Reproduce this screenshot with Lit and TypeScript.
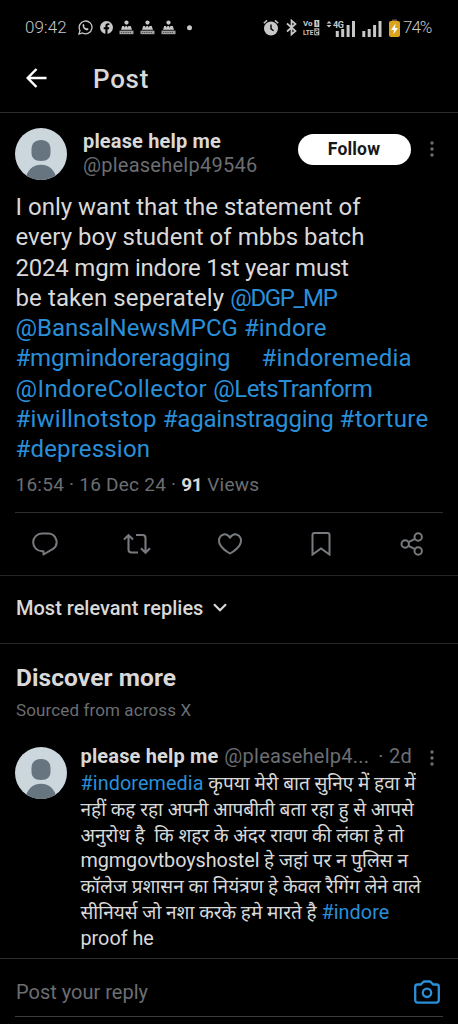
import { LitElement, html, css, svg } from "lit";
import { customElement } from "lit/decorators.js";

type Part = { text: string; kind: "plain" | "link" | "latin"; spacing: number };

const t = (text: string, spacing = 0): Part => ({ text, kind: "plain", spacing });
const a = (text: string, spacing = 0): Part => ({ text, kind: "link", spacing });
const l = (text: string, spacing = 0): Part => ({ text, kind: "latin", spacing });

const POST: Part[][] = [
  [t("I only want that the statement of", 0)],
  [t("every boy student of mbbs batch", 0.03)],
  [t("2024 mgm indore 1st year must", -0.22)],
  [t("be taken seperately ", 0.1), a("@DGP_MP", -1.35)],
  [a("@BansalNewsMPCG", 0), t(" "), a("#indore", 0.15)],
  [a("#mgmindoreragging", -0.16), t("     ", 0.3), a("#indoremedia", 0.18)],
  [a("@IndoreCollector", 0.42), t(" ", 0.2), a("@LetsTranform", -0.55)],
  [a("#iwillnotstop", 0.24), t(" "), a("#againstragging", -0.2), t(" "), a("#torture", 0.3)],
  [a("#depression", 0.18)],
];

const REPLY: Part[][] = [
  [a("#indoremedia", 0.1), t(" कृपया मेरी बात सुनिए में हवा में")],
  [t("नहीं कह रहा अपनी आपबीती बता रहा हु से आपसे")],
  [t("अनुरोध है  कि शहर के अंदर रावण की लंका हे तो")],
  [l("mgmgovtboyshostel", -0.07), t(" हे जहां पर न पुलिस न")],
  [t("कॉलेज प्रशासन का नियंत्रण हे केवल रैगिंग लेने वाले")],
  [t("सीनियर्स जो नशा करके हमे मारते है "), a("#indore", 0.1)],
  [l("proof he")],
];

const lines = (list: Part[][]) =>
  list.map(
    (parts) => html`<div class="line">${parts.map(
      (p) => html`<span class=${p.kind} style="letter-spacing:${p.spacing}px">${p.text}</span>`
    )}</div>`
  );

const avatar = html`<svg class="avatar" width="52" height="52" viewBox="0 0 52 52">
  <defs><clipPath id="disc"><circle cx="26" cy="26" r="26" /></clipPath></defs>
  <g clip-path="url(#disc)">
    <rect width="52" height="52" fill="#ccd6dd" />
    <path d="M26 12c6 0 9.500 3.500 9.500 9.500v3c0 5.500-3 8.500-9.500 8.500s-9.500-3-9.500-8.500v-3C16.500 15.500 20 12 26 12z" fill="#66757f" />
    <path d="M10 54c1-11 7-17.300 16-17.300S41 43 42 54z" fill="#66757f" />
  </g>
</svg>`;

const dots = html`<svg class="dots" width="6" height="18" viewBox="0 0 6 18" fill="#6b6e72">
  <circle cx="3" cy="3" r="1.700" /><circle cx="3" cy="9" r="1.700" /><circle cx="3" cy="15" r="1.700" />
</svg>`;

const people = html`<svg width="15" height="15" viewBox="0 0 15 15" fill="#c8c8c8">
  <circle cx="7.500" cy="2.600" r="2.100" />
  <path d="M3.200 6h2v1.200h1V6h2v1.200h1V6h2.500l1.300 3.800H2z" />
  <path d="M.5 10.600h14v3.600H.5z" opacity=".8" />
  <path d="M2 12.500h11" stroke="#000" stroke-width=".9" stroke-dasharray="1.200 1" opacity=".6" />
</svg>`;

const bars = (x: number) => svg`<path d="M${x} 12h3v6h-3zM${x + 5.4} 10h3v8h-3zM${x + 10.8} 6h3v12h-3zM${x + 16.2} 2h3v16h-3z" />`;

@customElement("app-root")
export class AppRoot extends LitElement {
  static styles = css`
    :host {
      display: flex;
      flex-direction: column;
      height: 1024px;
      overflow: hidden;
      background: #000;
      color: #d9d9d9;
      font-family: Roboto, "Noto Sans", sans-serif;
      font-size: 20px;
    }
    svg { display: block; flex: none; }
    .status { display: flex; align-items: center; height: 55px; padding: 0 27px 0 25px; font-size: 17px; line-height: 20px; color: #c8c8c8; box-sizing: border-box; }
    .clock { width: 53px; letter-spacing: 0.1px; font-weight: 300; margin-top: -1px; }
    .notes { display: flex; align-items: center; gap: 6px; flex: 1; }
    .notes .fb { margin-left: 1px; }
    .system { display: flex; align-items: center; }
    .bt { margin-left: 7px; }
    .volte { margin-left: 6px; }
    .sig1 { margin-left: 5px; }
    .sig2 { margin-left: 6px; }
    .batt { margin-left: 7px; }
    .pct { margin: -1px 0 0 3px; letter-spacing: -1px; font-weight: 300; width: 28px; white-space: nowrap; }
    .bar { display: flex; align-items: center; height: 58px; box-sizing: border-box; padding: 0 0 12px 26px; border-bottom: 1px solid #2a2c2e; }
    .bar h1 { margin: 3px 0 0 46px; font-size: 26px; font-weight: 500; line-height: 30px; letter-spacing: 0.7px; }
    .post { display: flex; flex-direction: column; height: 462px; padding: 0 15px; border-bottom: 1px solid #232527; }
    .author { display: flex; height: 79px; padding-top: 15px; box-sizing: border-box; }
    .who { margin-left: 16px; flex: 1; white-space: nowrap; }
    .name { font-weight: 700; font-size: 20px; line-height: 23px; letter-spacing: 0.15px; }
    .who .name { margin-top: 2px; }
    .handle { color: #6b6e72; line-height: 24px; letter-spacing: 0.25px; }
    .follow { width: 113px; height: 31px; margin: 6px 18px 0 0; padding: 0 1px 0 0; border: 0; border-radius: 16px; background: #fff; color: #16181a; font: 700 17.500px/29px Roboto, sans-serif; letter-spacing: 0.2px; }
    .author .dots { margin: 12px 8px 0 0; }
    .line { white-space: pre; }
    .link { color: #2a8fd9; }
    .body { font-size: 24px; padding-left: 0.500px; }
    .body .line { height: 30.250px; line-height: 30.250px; }
    .meta { display: flex; height: 49px; box-sizing: border-box; padding: 9px 0 0 0.500px; color: #6b6e72; font-size: 19px; line-height: 24px; white-space: pre; letter-spacing: 0.25px; border-bottom: 1px solid #2c2e30; }
    .meta b { color: #d9d9d9; letter-spacing: -0.4px; }
    .actions { display: flex; align-items: center; justify-content: space-between; flex: 1; padding: 0 19.500px 0 17px; }
    .sort { display: flex; align-items: center; height: 64px; padding: 0 16px 3px; border-bottom: 1px solid #232527; font-weight: 500; gap: 10px; }
    .sort span { margin-top: -1px; }
    .sort svg { margin-top: -2px; }
    .discover { padding: 18px 16px 0; height: 85px; }
    .discover h2 { margin: 0; font-size: 24.500px; line-height: 32px; font-weight: 700; letter-spacing: 0.08px; }
    .discover p { margin: 3px 0 0; font-size: 17px; line-height: 26px; color: #6b6e72; letter-spacing: 0.12px; }
    .more { display: flex; height: 211px; padding: 0 15px; border-bottom: 1px solid #2a2c2e; }
    .content { margin-left: 13.500px; flex: 1; }
    .head { display: flex; align-items: baseline; height: 27px; margin-top: -3px; white-space: nowrap; }
    .head .name, .head .handle { line-height: 25px; }
    .head .handle { margin-left: 6px; width: 154px; }
    .head .age { width: auto; margin-left: 0; }
    .text { font-size: 19px; }
    .text .line { height: 25.750px; line-height: 25.750px; }
    .text .link, .text .latin { font-size: 19.800px; }
    .more .dots { margin: 2px 8px 0 0; }
    .reply { display: flex; align-items: center; justify-content: space-between; height: 58px; margin: 0 15px; padding: 9px 3px 0 1px; box-sizing: border-box; border-bottom: 1px solid #3a3c3e; color: #6b6e72; }
  `;

  render() {
    return html`
      <div class="status">
        <span class="clock">09:42</span>
        <div class="notes">
          <svg width="15" height="15" viewBox="0 0 15 15" fill="none" stroke="#c8c8c8" stroke-width="1.300">
            <path d="M1 14l1-3.500A6.400 6.400 0 1 1 4.500 13z" />
            <path d="M4.800 4.300c.5-.6 1-.5 1.200.1l.5 1.100c-.6.900-.3 1.200.5 2 .9.900 1.300 1 2 .4l1.300.7c.7.400-.2 1.800-1.300 1.800-2.300 0-5.300-3-4.200-6.100z" fill="#c8c8c8" stroke="none" />
          </svg>
          <svg class="fb" width="13" height="13" viewBox="0 0 13 13">
            <circle cx="6.500" cy="6.500" r="6.500" fill="#c8c8c8" />
            <path d="M5.400 13V8.300H3.700V6.300h1.700V5c0-1.800 1-2.700 2.600-2.700l1.400.1v1.700h-.9c-.8 0-1 .4-1 1v1.200h1.800l-.3 2H7.500V13z" fill="#000" />
          </svg>
          ${people}${people}${people}
          <svg width="15" height="6" viewBox="0 0 15 6"><circle cx="7.500" cy="2.700" r="2.500" fill="#c8c8c8" /></svg>
        </div>
        <div class="system">
          <svg width="16" height="17" viewBox="0 0 16 17">
            <circle cx="8" cy="9.500" r="7" fill="#c8c8c8" />
            <path d="M.8 4.300L4 1.400M15.200 4.300L12 1.400" stroke="#c8c8c8" stroke-width="1.500" fill="none" />
            <path d="M8 5.500v4.300l2.600 2" stroke="#000" stroke-width="1.400" fill="none" />
          </svg>
          <svg class="bt" width="11" height="17" viewBox="0 0 11 17" fill="none" stroke="#c8c8c8" stroke-width="1.700">
            <path d="M1 4.500l8.500 7.500L5.500 15.500V1.500L9.500 5 1 12.500" />
          </svg>
          <svg class="volte" width="18" height="17" viewBox="0 0 18 17" fill="#c8c8c8" font-family="Roboto" font-weight="700">
            <text x="0" y="7.300" font-size="8" textLength="9.500" lengthAdjust="spacingAndGlyphs">Vo</text>
            <text x="0" y="16" font-size="8" textLength="10.500" lengthAdjust="spacingAndGlyphs">LTE</text>
            <rect x="11.300" y="1" width="5" height="7" />
            <rect x="11.300" y="9.300" width="5" height="7" />
            <path d="M13 2.800h1v3.700M12.400 10.900h2.600v1.700h-2.500v2.300h2.600" stroke="#000" stroke-width=".9" fill="none" />
          </svg>
          <svg class="sig1" width="30" height="18" viewBox="0 0 30 18" fill="#c8c8c8">
            <path d="M.5 4.500L3 2l2.500 2.500zM.5 6L3 8.500 5.500 6z" />
            <text x="7" y="8.500" font-family="Roboto" font-size="9" font-weight="700" letter-spacing="-.5">4G</text>
            ${bars(9.8)}
          </svg>
          <svg class="sig2" width="20" height="18" viewBox="0 0 20 18" fill="#c8c8c8">${bars(0.3)}</svg>
          <svg class="batt" width="11" height="18" viewBox="0 0 11 18">
            <path d="M3 .5h5V3H3z" fill="#6a5a40" />
            <rect y="2" width="11" height="16" rx="2" fill="#dba21c" />
            <path d="M6.500 4.500L2 11h3l-.8 4.500L9 9H6z" fill="#fff" />
          </svg>
          <span class="pct">74%</span>
        </div>
      </div>
      <div class="bar">
        <svg width="21" height="20" viewBox="0 0 21 20" fill="none" stroke="#fff" stroke-width="2.500">
          <path d="M10.500 1L1.700 10l8.800 9M1.700 10H20.500" />
        </svg>
        <h1>Post</h1>
      </div>
      <div class="post">
        <div class="author">
          ${avatar}
          <div class="who">
            <div class="name">please help me</div>
            <div class="handle">@pleasehelp49546</div>
          </div>
          <button class="follow">Follow</button>
          ${dots}
        </div>
        <div class="body">${lines(POST)}</div>
        <div class="meta">16:54 · 16 Dec 24 · <b>91</b> Views</div>
        <div class="actions">
          <svg width="26" height="24" viewBox="0 0 26 24" fill="none" stroke="#777a7e" stroke-width="2">
            <path d="M11.500 19.200H10A8.700 8.700 0 0 1 10 1.500h6a8.500 8.500 0 0 1 5 15.400l-9.500 5.600z" stroke-linejoin="round" />
          </svg>
          <svg width="28" height="22" viewBox="0 0 28 22" fill="none" stroke="#777a7e" stroke-width="2.100">
            <path d="M1 6.500l4.500-4.400L10 6.500M5.500 2.500v14a3 3 0 0 0 3 3H15M13 2h6.500a3 3 0 0 1 3 3v14M18 15.300l4.500 4.400 4.500-4.400" />
          </svg>
          <svg width="26" height="22" viewBox="0 0 26 22" fill="none" stroke="#777a7e" stroke-width="2">
            <path d="M13 4.600C11 1.800 8.500 1 6.500 1.500 2.500 2.500.8 7 3 11.500c1.800 3.600 5.500 6.500 10 9 4.500-2.500 8.200-5.400 10-9 2.200-4.500.5-9-3.500-10C17.500 1 15 1.800 13 4.600z" />
          </svg>
          <svg width="26" height="24" viewBox="0 0 26 24" fill="none" stroke="#777a7e" stroke-width="2">
            <path d="M4.500 22.500V3a2 2 0 0 1 2-2h13a2 2 0 0 1 2 2v19.500l-8.500-6z" />
          </svg>
          <svg width="24" height="24" viewBox="0 0 24 24" fill="none" stroke="#777a7e" stroke-width="2">
            <circle cx="5.200" cy="12" r="3.700" /><circle cx="18.200" cy="5" r="3.700" /><circle cx="18.200" cy="19" r="3.700" />
            <path d="M8.500 10.200L15 6.800M8.500 13.800L15 17.200" />
          </svg>
        </div>
      </div>
      <div class="sort">
        <span>Most relevant replies</span>
        <svg width="14" height="9" viewBox="0 0 14 9" fill="none" stroke="#d9d9d9" stroke-width="2.200"><path d="M1 1.200l6 6 6-6" /></svg>
      </div>
      <div class="discover">
        <h2>Discover more</h2>
        <p>Sourced from across X</p>
      </div>
      <div class="more">
        ${avatar}
        <div class="content">
          <div class="head">
            <span class="name">please help me</span>
            <span class="handle">@pleasehelp4...</span>
            <span class="handle age">· 2d</span>
          </div>
          <div class="text">${lines(REPLY)}</div>
        </div>
        ${dots}
      </div>
      <div class="reply">
        <span>Post your reply</span>
        <svg width="26" height="24" viewBox="0 0 26 24" fill="none" stroke="#2a8fd9" stroke-width="2.300">
          <path d="M3.500 4.500h3.300L9 2.200c.4-.5.900-.7 1.500-.7h5c.6 0 1.100.2 1.500.7l2.200 2.300h3.300A2.300 2.300 0 0 1 24.800 6.800v13.500a2.300 2.300 0 0 1-2.300 2.300h-19a2.300 2.300 0 0 1-2.300-2.300V6.800a2.300 2.300 0 0 1 2.300-2.300z" />
          <circle cx="13" cy="12.800" r="4.200" />
        </svg>
      </div>
    `;
  }
}
